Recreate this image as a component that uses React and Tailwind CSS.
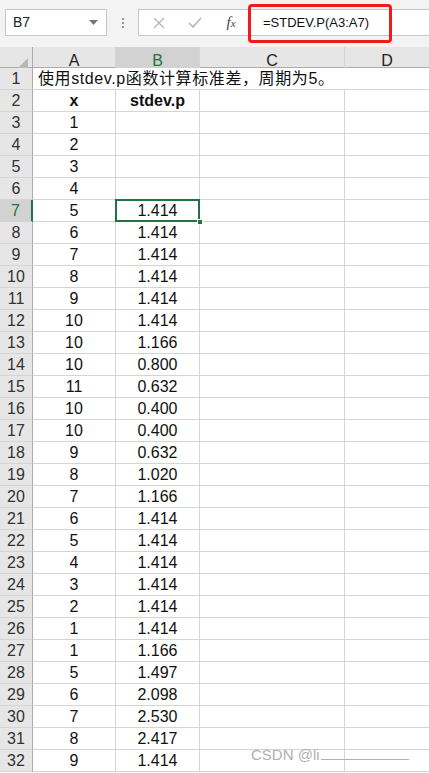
import React from "react";

const rows = [
  ["1", "", ""],
  ["2", "", ""],
  ["3", "", ""],
  ["4", "", ""],
  ["5", "1.414"],
  ["6", "1.414"],
  ["7", "1.414"],
  ["8", "1.414"],
  ["9", "1.414"],
  ["10", "1.414"],
  ["10", "1.166"],
  ["10", "0.800"],
  ["11", "0.632"],
  ["10", "0.400"],
  ["10", "0.400"],
  ["9", "0.632"],
  ["8", "1.020"],
  ["7", "1.166"],
  ["6", "1.414"],
  ["5", "1.414"],
  ["4", "1.414"],
  ["3", "1.414"],
  ["2", "1.414"],
  ["1", "1.414"],
  ["1", "1.166"],
  ["5", "1.497"],
  ["6", "2.098"],
  ["7", "2.530"],
  ["8", "2.417"],
  ["9", "1.414"],
];

const cols = "grid grid-cols-[33px_83px_84px_145px_84px]";

function RowHead({ n, active }) {
  return (
    <div
      className={`h-[22px] flex items-center justify-center border-b border-[#d4d4d4] text-[16px] ${
        active ? "bg-[#d2d2d2] border-r-2 border-r-[#217346] text-[#217346]" : "bg-[#e6e6e6] border-r border-r-[#ababab] text-[#333]"
      }`}
    >
      {n}
    </div>
  );
}

function Cell({ children, className = "" }) {
  return (
    <div className={`h-[22px] border-b border-r border-[#d4d4d4] flex items-center justify-center text-[16px] text-[#111] ${className}`}>
      {children}
    </div>
  );
}

export default function App() {
  return (
    <div className="w-[429px] h-[773px] overflow-hidden bg-white relative" style={{ fontFamily: '"Liberation Sans", Arial, "Noto Sans CJK SC", sans-serif' }}>
      {/* formula bar */}
      <div className="h-[47px] bg-[#f3f3f3] flex items-start pt-[9px] pl-[5px] relative">
        <div className="w-[102px] h-[27px] bg-white border border-[#c6c6c6] flex items-center justify-between pl-[7px] pr-[8px]">
          <span className="text-[14px] text-[#222]">B7</span>
          <svg width="9" height="5" viewBox="0 0 9 5"><path d="M0 0h9L4.5 5z" fill="#777" /></svg>
        </div>
        <div className="w-[31px] h-[27px] flex flex-col items-center justify-center gap-[2px]">
          <span className="w-[2px] h-[2px] bg-[#999]" />
          <span className="w-[2px] h-[2px] bg-[#999]" />
          <span className="w-[2px] h-[2px] bg-[#999]" />
        </div>
        <div className="flex-1 h-[27px] bg-white border border-[#c6c6c6] border-r-0 flex items-center">
          <div className="w-[38px] flex justify-center ml-[1px]">
            <svg width="12" height="12" viewBox="0 0 12 12"><path d="M1 1l10 10M11 1L1 11" stroke="#b5b5b5" strokeWidth="1.3" /></svg>
          </div>
          <div className="w-[34px] flex justify-center">
            <svg width="14" height="11" viewBox="0 0 14 11"><path d="M1 6l4 4 8-9" stroke="#b5b5b5" strokeWidth="1.6" fill="none" /></svg>
          </div>
          <div className="w-[38px] flex justify-center">
            <span className="text-[15px] italic text-[#444]" style={{ fontFamily: '"Liberation Serif", serif' }}>
              f<span className="text-[11px]">x</span>
            </span>
          </div>
          <span className="ml-[13px] text-[13px] text-[#111]">=STDEV.P(A3:A7)</span>
        </div>
        <div className="absolute left-[248px] top-[4px] w-[144px] h-[39px] border-[3px] border-[#ee1c1c] rounded-[4px]" />
      </div>

      {/* column headers */}
      <div className={`${cols} h-[21px] bg-[#e6e6e6] border-b border-[#ababab]`}>
        <div className="border-r border-[#ababab] flex items-end justify-end pr-[4px] pb-[3px]">
          <svg width="14" height="14" viewBox="0 0 14 14"><path d="M14 0v14H0z" fill="#b8b8b8" /></svg>
        </div>
        <div className="border-r border-[#d4d4d4] flex items-center justify-center text-[16px] text-[#222]">A</div>
        <div className="bg-[#d2d2d2] border-r border-[#d4d4d4] border-b-2 border-b-[#217346] flex items-center justify-center text-[16px] text-[#217346] pt-[2px]">B</div>
        <div className="border-r border-[#d4d4d4] flex items-center justify-center text-[16px] text-[#222]">C</div>
        <div className="flex items-center justify-center text-[16px] text-[#222]">D</div>
      </div>

      {/* grid */}
      <div className={cols}>
        <RowHead n={1} />
        <div className="col-span-4 h-[22px] border-b border-[#d4d4d4] relative">
          <div className="absolute inset-0 grid grid-cols-[83px_84px_145px_84px] pointer-events-none">
            <div className="border-r border-[#d4d4d4]" />
            <div className="border-r border-[#d4d4d4]" />
            <div className="border-r border-[#d4d4d4]" />
            <div />
          </div>
          <div className="relative h-[21px] flex items-center pl-[5px] text-[16px] tracking-[0.6px] text-[#111] whitespace-nowrap bg-white w-[312px]">
            使用stdev.p函数计算标准差，周期为5。
          </div>
        </div>

        <RowHead n={2} />
        <Cell className="font-bold">x</Cell>
        <Cell className="font-bold">stdev.p</Cell>
        <Cell />
        <Cell className="border-r-0" />

        {rows.map((r, i) => {
          const n = i + 3;
          const active = n === 7;
          return (
            <React.Fragment key={n}>
              <RowHead n={n} active={active} />
              <Cell>{r[0]}</Cell>
              {active ? (
                <div className="h-[22px] relative">
                  <div className="absolute left-[-1px] top-[-1px] right-0 bottom-0 border-2 border-[#217346] flex items-center justify-center text-[16px] text-[#111]">
                    {r[1]}
                  </div>
                  <div className="absolute right-[-3px] bottom-[-3px] w-[6px] h-[6px] bg-[#217346] border border-white" />
                </div>
              ) : (
                <Cell>{r[1]}</Cell>
              )}
              <Cell />
              <Cell className="border-r-0" />
            </React.Fragment>
          );
        })}
      </div>

      <div className="absolute left-[251px] top-[744px] text-[15px] text-[#b0b0b0]" style={{ fontFamily: '"Liberation Sans", sans-serif' }}>
        CSDN @li<span className="inline-block w-[88px] border-b border-[#b0b0b0] ml-[1px]" />
      </div>
    </div>
  );
}
